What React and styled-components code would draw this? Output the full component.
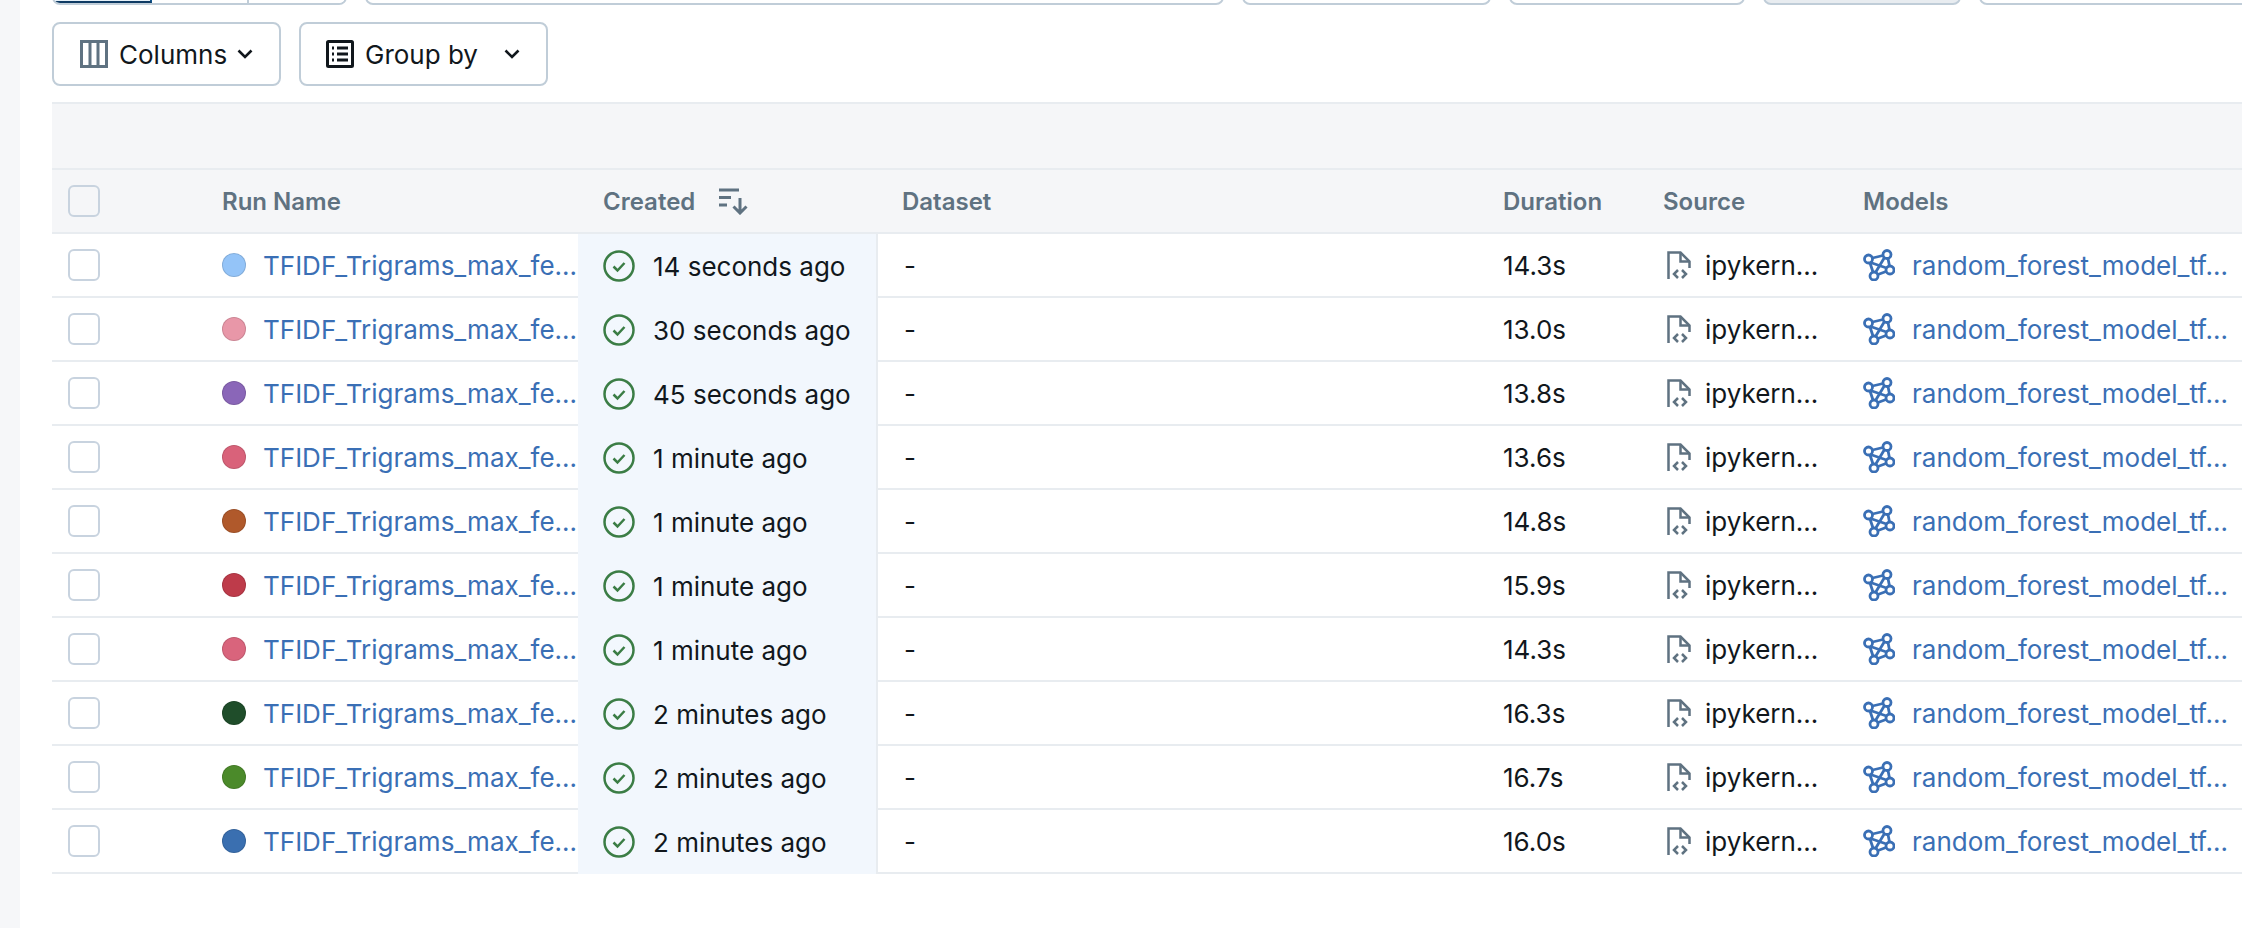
import React from 'react';
import styled, { createGlobalStyle } from 'styled-components';

const GlobalStyle = createGlobalStyle`
  html, body {
    margin: 0;
    padding: 0;
    background: #fff;
    font-family: Inter, "Liberation Sans", sans-serif;
    color: #11171c;
  }
`;

const Page = styled.div`
  display: flex;
  width: 2242px;
  height: 928px;
  overflow: hidden;
`;

const SideStrip = styled.div`
  width: 20px;
  flex: none;
  background: #f6f7f9;
`;

const Main = styled.div`
  flex: 1;
  min-width: 0;
  padding-left: 32px;
`;

const ClippedBar = styled.div`
  display: flex;
  align-items: flex-end;
  height: 5px;
  overflow: hidden;
  gap: 18px;
`;

const TopControl = styled.div`
  flex: none;
  box-sizing: border-box;
  width: ${({ $w }) => $w}px;
  height: 60px;
  border: 2px solid #c0cdd8;
  border-radius: 8px;
  background: ${({ $muted }) => ($muted ? '#e8ecf0' : '#fff')};
`;

const Segments = styled.div`
  display: flex;
  flex: none;
  width: 295px;
  height: 60px;
  box-sizing: border-box;
  border: 2px solid #c0cdd8;
  border-radius: 8px;
  overflow: hidden;
`;

const Segment = styled.div`
  flex: 1;
  box-sizing: border-box;
  border-right: 2px solid ${({ $active }) => ($active ? '#0e538b' : '#c0cdd8')};
  background: ${({ $active }) => ($active ? '#e6f1f9' : '#fff')};
  border-bottom: ${({ $active }) => ($active ? '2px solid #0e3a63' : 'none')};
  &:last-child {
    border-right: none;
  }
`;

const Toolbar = styled.div`
  display: flex;
  gap: 18px;
  margin-top: 17px;
  margin-bottom: 16px;
`;

const ToolButton = styled.button`
  display: flex;
  align-items: center;
  box-sizing: border-box;
  width: ${({ $w }) => $w}px;
  height: 64px;
  padding: 0 0 0 ${({ $pad }) => $pad}px;
  border: 2px solid #c0cdd8;
  border-radius: 8px;
  background: #fff;
  font: 400 26px Inter, "Liberation Sans", sans-serif;
  color: #11171c;
`;

const ButtonLabel = styled.span`
  margin: 0 ${({ $after }) => $after}px 0 ${({ $before }) => $before}px;
`;

const GroupBand = styled.div`
  height: 64px;
  background: #f5f6f8;
  border-top: 2px solid #e8ecf0;
  border-bottom: 2px solid #e8ecf0;
`;

const columns = '154px 372px 300px 609px 160px 200px 1fr';

const HeaderRow = styled.div`
  display: grid;
  grid-template-columns: ${columns};
  height: 64px;
  box-sizing: border-box;
  background: #f5f6f8;
  border-bottom: 2px solid #e8ecf0;
`;

const Row = styled.div`
  display: grid;
  grid-template-columns: ${columns};
  height: 64px;
  box-sizing: border-box;
  border-bottom: 2px solid #e8ecf0;
`;

const Cell = styled.div`
  display: flex;
  align-items: center;
  min-width: 0;
  padding-left: ${({ $pad }) => $pad ?? 16}px;
  font-size: 26px;
  white-space: nowrap;
`;

const HeadCell = styled(Cell)`
  font-weight: 600;
  font-size: 24px;
  color: #5f7281;
`;

const CreatedCell = styled(Cell)`
  background: #f2f7fd;
  border-right: 2px solid #e8ecf0;
  margin-bottom: -2px;
`;

const Checkbox = styled.span`
  display: block;
  box-sizing: border-box;
  width: 32px;
  height: 32px;
  border: 2px solid #c8d3df;
  border-radius: 6px;
  background: #fff;
`;

const HeadCheckbox = styled(Checkbox)`
  background: transparent;
`;

const Dot = styled.span`
  flex: none;
  box-sizing: border-box;
  width: 24px;
  height: 24px;
  margin-right: 17px;
  border-radius: 50%;
  background: ${({ $color }) => $color};
  border: 1px solid rgba(0, 0, 0, 0.12);
`;

const Link = styled.a`
  color: #3a6fb5;
  text-decoration: none;
`;

const StatusText = styled.span`
  margin-left: 18px;
`;

const SourceText = styled.span`
  margin-left: 14px;
`;

const ModelText = styled(Link)`
  margin-left: 17px;
`;

const SortIcon = styled.svg`
  margin-left: 24px;
`;

const ColumnsIcon = () => (
  <svg width="28" height="28" viewBox="0 0 28 28" fill="none" stroke="#5f7281" strokeWidth="3">
    <rect x="1.5" y="1.5" width="25" height="25" />
    <path d="M10 2v24M18 2v24" />
  </svg>
);

const ListIcon = () => (
  <svg width="28" height="28" viewBox="0 0 28 28" fill="none" stroke="#11171c">
    <rect x="1.5" y="1.5" width="25" height="25" rx="1" strokeWidth="3" />
    <path d="M11 8h11M11 14h11M11 20h11" strokeWidth="3" />
    <path d="M6 8h2M6 14h2M6 20h2" strokeWidth="3" />
  </svg>
);

const Chevron = () => (
  <svg width="16" height="10" viewBox="0 0 16 10" fill="none" stroke="#11171c" strokeWidth="2.6">
    <path d="M1.5 1.5 8 8l6.5-6.5" />
  </svg>
);

const SortDownIcon = () => (
  <SortIcon width="30" height="28" viewBox="0 0 30 28" fill="none" stroke="#5f7281" strokeWidth="3">
    <path d="M0 3h20M0 10.500h12M0 18h8" />
    <path d="M21 11v15M14.500 19.500 21 26l6.500-6.500" />
  </SortIcon>
);

const StatusIcon = () => (
  <svg width="32" height="32" viewBox="0 0 32 32" fill="none" stroke="#3b7d45">
    <circle cx="16" cy="16" r="14.500" strokeWidth="2.500" />
    <path d="M10.500 16.500l4 4 7-7.500" strokeWidth="2.500" />
  </svg>
);

const NotebookIcon = () => (
  <svg width="24" height="28" viewBox="0 0 24 28" fill="none" stroke="#5f7281" strokeWidth="2.500">
    <path d="M1.500 28V1.500h12l9 9V17" />
    <path d="M13.500 2v8.500H22" />
    <path d="M11 19l-4 4 4 4M15 19l4 4-4 4" />
  </svg>
);

const ModelIcon = () => (
  <svg width="32" height="32" viewBox="0 0 32 32" fill="none" stroke="#3a6fb5" strokeWidth="2.800">
    <circle cx="24" cy="5.500" r="4" />
    <circle cx="5.500" cy="10" r="4" />
    <circle cx="27" cy="21" r="4" />
    <circle cx="11" cy="27" r="4" />
    <path d="M9.500 9 20 6.500M25 9.500l1.500 7.500M23 22.500l-8 3M7 14l3 9M7.500 13.500 23.500 19M21.500 8.500 12.500 23.500" />
  </svg>
);

const runs = [
  { color: '#94c4f8', created: '14 seconds ago', duration: '14.3s' },
  { color: '#e897a8', created: '30 seconds ago', duration: '13.0s' },
  { color: '#8a66b8', created: '45 seconds ago', duration: '13.8s' },
  { color: '#d9627a', created: '1 minute ago', duration: '13.6s' },
  { color: '#b0592b', created: '1 minute ago', duration: '14.8s' },
  { color: '#be3b4a', created: '1 minute ago', duration: '15.9s' },
  { color: '#d9647c', created: '1 minute ago', duration: '14.3s' },
  { color: '#1f4d2a', created: '2 minutes ago', duration: '16.3s' },
  { color: '#4b8a2a', created: '2 minutes ago', duration: '16.7s' },
  { color: '#3a6fb0', created: '2 minutes ago', duration: '16.0s' },
];

const App = () => (
  <Page>
    <GlobalStyle />
    <SideStrip />
    <Main>
      <ClippedBar>
        <Segments>
          <Segment $active />
          <Segment />
          <Segment />
        </Segments>
        <TopControl $w={859} />
        <TopControl $w={249} />
        <TopControl $w={236} />
        <TopControl $w={198} $muted />
        <TopControl $w={300} />
      </ClippedBar>
      <Toolbar>
        <ToolButton $w={229} $pad={26}>
          <ColumnsIcon />
          <ButtonLabel $before={11} $after={10}>Columns</ButtonLabel>
          <Chevron />
        </ToolButton>
        <ToolButton $w={249} $pad={25}>
          <ListIcon />
          <ButtonLabel $before={11} $after={26}>Group by</ButtonLabel>
          <Chevron />
        </ToolButton>
      </Toolbar>
      <GroupBand />
      <HeaderRow>
        <HeadCell><HeadCheckbox /></HeadCell>
        <HeadCell>Run Name</HeadCell>
        <HeadCell $pad={25}>Created<SortDownIcon /></HeadCell>
        <HeadCell $pad={24}>Dataset</HeadCell>
        <HeadCell>Duration</HeadCell>
        <HeadCell>Source</HeadCell>
        <HeadCell>Models</HeadCell>
      </HeaderRow>
      {runs.map((run, i) => (
        <Row key={i}>
          <Cell><Checkbox /></Cell>
          <Cell><Dot $color={run.color} /><Link>TFIDF_Trigrams_max_fe...</Link></Cell>
          <CreatedCell $pad={25}><StatusIcon /><StatusText>{run.created}</StatusText></CreatedCell>
          <Cell $pad={26}>-</Cell>
          <Cell>{run.duration}</Cell>
          <Cell $pad={20}><NotebookIcon /><SourceText>ipykern...</SourceText></Cell>
          <Cell><ModelIcon /><ModelText>random_forest_model_tf...</ModelText></Cell>
        </Row>
      ))}
    </Main>
  </Page>
);

export default App;
